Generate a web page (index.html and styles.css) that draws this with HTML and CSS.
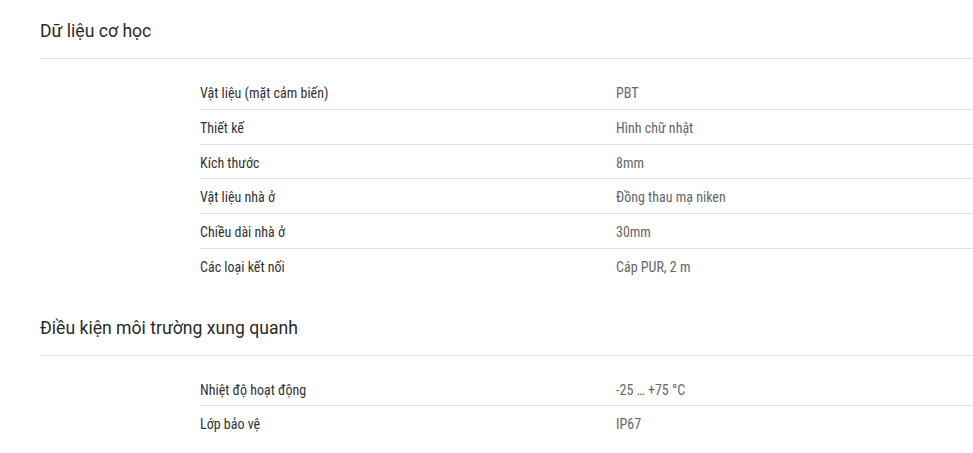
FILE: index.html
```html
<!DOCTYPE html>
<html lang="vi">
<head>
<meta charset="utf-8">
<link rel="stylesheet" href="styles.css">
</head>
<body>
<div class="page">
  <section class="section">
    <h2 class="section-title">Dữ liệu cơ học</h2>
    <div class="rows">
      <div class="row"><div class="label">Vật liệu (mặt cảm biến)</div><div class="value">PBT</div></div>
      <div class="row"><div class="label">Thiết kế</div><div class="value">Hình chữ nhật</div></div>
      <div class="row"><div class="label">Kích thước</div><div class="value">8mm</div></div>
      <div class="row"><div class="label">Vật liệu nhà ở</div><div class="value">Đồng thau mạ niken</div></div>
      <div class="row"><div class="label">Chiều dài nhà ở</div><div class="value">30mm</div></div>
      <div class="row"><div class="label">Các loại kết nối</div><div class="value">Cáp PUR, 2 m</div></div>
    </div>
  </section>
  <section class="section">
    <h2 class="section-title">Điều kiện môi trường xung quanh</h2>
    <div class="rows">
      <div class="row"><div class="label">Nhiệt độ hoạt động</div><div class="value">-25 … +75 °C</div></div>
      <div class="row"><div class="label">Lớp bảo vệ</div><div class="value">IP67</div></div>
    </div>
  </section>
</div>
</body>
</html>
```
FILE: styles.css
```css
html, body {
  margin: 0;
  padding: 0;
  background: #fff;
}
body {
  font-family: Roboto, "Liberation Sans", sans-serif;
  color: #333;
}
.page {
  padding-left: 40px;
}
.section {
  padding-top: 19px;
  padding-bottom: 14px;
}
.section-title {
  margin: 0;
  font-size: 17.6px;
  font-weight: 400;
  line-height: 24px;
  color: #2a2a2a;
  padding-bottom: 15px;
  border-bottom: 1px solid #e2e2e2;
}
.rows {
  padding-top: 16px;
  margin-left: 160px;
}
.row {
  display: flex;
  font-family: "Roboto Condensed", Roboto, "Liberation Sans Narrow", sans-serif;
  font-stretch: condensed;
  font-size: 14px;
  line-height: 20px;
  padding: 8px 0 5.75px;
  border-bottom: 1px solid #e2e2e2;
}
.row:last-child {
  border-bottom: none;
}
.label {
  width: 416px;
  flex: none;
  color: #333;
}
.value {
  color: #666;
}
```
